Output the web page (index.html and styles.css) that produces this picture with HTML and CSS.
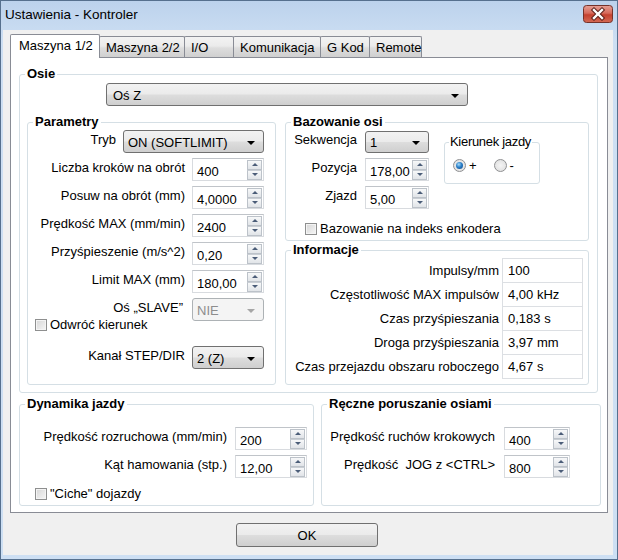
FILE: index.html
```html
<!DOCTYPE html>
<html lang="pl">
<head>
<meta charset="utf-8">
<title>Ustawienia - Kontroler</title>
<link rel="stylesheet" href="styles.css">
</head>
<body>
<div class="window">
  <div class="titlebar">
    <span class="title">Ustawienia - Kontroler</span>
    <span class="close">
      <svg width="30" height="18" viewBox="0 0 30 18">
        <defs>
          <linearGradient id="cg" x1="0" y1="0" x2="0" y2="1">
            <stop offset="0" stop-color="#e6a196"/>
            <stop offset="0.45" stop-color="#d66a5b"/>
            <stop offset="0.55" stop-color="#c4412f"/>
            <stop offset="1" stop-color="#d46a55"/>
          </linearGradient>
        </defs>
        <rect x="0.5" y="0.5" width="29" height="17" rx="3" fill="url(#cg)" stroke="#74322a"/>
        <path d="M11 5 L19 13 M19 5 L11 13" stroke="#5a1f18" stroke-width="4.4" stroke-linecap="square"/>
        <path d="M11 5 L19 13 M19 5 L11 13" stroke="#ffffff" stroke-width="2.4" stroke-linecap="square"/>
      </svg>
    </span>
  </div>
  <div class="client">
    <div class="tabs">
      <div class="tab active w1">Maszyna 1/2</div>
      <div class="tab w2">Maszyna 2/2</div>
      <div class="tab w3">I/O</div>
      <div class="tab w4">Komunikacja</div>
      <div class="tab w5">G Kod</div>
      <div class="tab w6">Remote</div>
    </div>
    <div class="page">
      <fieldset class="grp osie">
        <legend>Osie</legend>
        <div class="combo axis"><span>Oś Z</span><i class="caret"></i></div>
        <div class="osie-cols">
          <fieldset class="grp params">
            <legend>Parametry</legend>
            <div class="prow first"><span class="lbl">Tryb</span><div class="combo tryb"><span>ON (SOFTLIMIT)</span><i class="caret"></i></div></div>
            <div class="prow"><span class="lbl">Liczba kroków na obrót</span><div class="spin w72"><span class="val">400</span><span class="arrows"><span class="up"></span><span class="dn"></span></span></div></div>
            <div class="prow"><span class="lbl">Posuw na obrót (mm)</span><div class="spin w72"><span class="val">4,0000</span><span class="arrows"><span class="up"></span><span class="dn"></span></span></div></div>
            <div class="prow"><span class="lbl">Prędkość MAX (mm/min)</span><div class="spin w72"><span class="val">2400</span><span class="arrows"><span class="up"></span><span class="dn"></span></span></div></div>
            <div class="prow"><span class="lbl">Przyśpieszenie (m/s^2)</span><div class="spin w72"><span class="val">0,20</span><span class="arrows"><span class="up"></span><span class="dn"></span></span></div></div>
            <div class="prow"><span class="lbl">Limit MAX (mm)</span><div class="spin w72"><span class="val">180,00</span><span class="arrows"><span class="up"></span><span class="dn"></span></span></div></div>
            <div class="prow"><span class="lbl slave">Oś „SLAVE”</span><div class="combo disabled w72"><span>NIE</span><i class="caret"></i></div></div>
            <div class="check odwroc"><span class="box"></span><span>Odwróć kierunek</span></div>
            <div class="prow kanal"><span class="lbl">Kanał STEP/DIR</span><div class="combo w72"><span>2 (Z)</span><i class="caret"></i></div></div>
          </fieldset>
          <div class="rcol">
            <fieldset class="grp homing">
              <legend>Bazowanie osi</legend>
              <div class="homing-top">
                <div class="hgrid">
                  <span class="lbl">Sekwencja</span><div class="combo seq"><span>1</span><i class="caret"></i></div>
                  <span class="lbl">Pozycja</span><div class="spin w64"><span class="val">178,00</span><span class="arrows"><span class="up"></span><span class="dn"></span></span></div>
                  <span class="lbl">Zjazd</span><div class="spin w64"><span class="val">5,00</span><span class="arrows"><span class="up"></span><span class="dn"></span></span></div>
                </div>
                <fieldset class="grp dir">
                  <legend>Kierunek jazdy</legend>
                  <div class="radios">
                    <span class="radio-item"><span class="radio on"></span><span>+</span></span>
                    <span class="radio-item"><span class="radio"></span><span>-</span></span>
                  </div>
                </fieldset>
              </div>
              <div class="check enc"><span class="box"></span><span>Bazowanie na indeks enkodera</span></div>
            </fieldset>
            <fieldset class="grp info">
              <legend>Informacje</legend>
              <div class="irow"><span>Impulsy/mm</span><span class="ival">100</span></div>
              <div class="irow"><span>Częstotliwość MAX impulsów</span><span class="ival">4,00 kHz</span></div>
              <div class="irow"><span>Czas przyśpieszania</span><span class="ival">0,183 s</span></div>
              <div class="irow"><span>Droga przyśpieszania</span><span class="ival">3,97 mm</span></div>
              <div class="irow"><span>Czas przejazdu obszaru roboczego</span><span class="ival">4,67 s</span></div>
            </fieldset>
          </div>
        </div>
      </fieldset>
      <div class="bottom-groups">
        <fieldset class="grp dyn">
          <legend>Dynamika jazdy</legend>
          <div class="drow first"><span class="lbl">Prędkość rozruchowa (mm/min)</span><div class="spin w72"><span class="val">200</span><span class="arrows"><span class="up"></span><span class="dn"></span></span></div></div>
          <div class="drow"><span class="lbl">Kąt hamowania (stp.)</span><div class="spin w72"><span class="val">12,00</span><span class="arrows"><span class="up"></span><span class="dn"></span></span></div></div>
          <div class="check ciche"><span class="box"></span><span>"Ciche" dojazdy</span></div>
        </fieldset>
        <fieldset class="grp jog">
          <legend>Ręczne poruszanie osiami</legend>
          <div class="jrow first"><span class="lbl">Prędkość ruchów krokowych</span><div class="spin w66"><span class="val">400</span><span class="arrows"><span class="up"></span><span class="dn"></span></span></div></div>
          <div class="jrow"><span class="lbl">Prędkość&nbsp; JOG z &lt;CTRL&gt;</span><div class="spin w66"><span class="val">800</span><span class="arrows"><span class="up"></span><span class="dn"></span></span></div></div>
        </fieldset>
      </div>
    </div>
    <div class="buttons"><div class="btn">OK</div></div>
  </div>
</div>
</body>
</html>
```

FILE: styles.css
```css
* { box-sizing: border-box; }
html, body { margin: 0; padding: 0; }
body {
  width: 618px;
  height: 560px;
  overflow: hidden;
  font-family: "Liberation Sans", Arial, sans-serif;
  font-size: 13px;
  color: #000;
  background: #cbdcf1;
}

.window {
  width: 618px;
  height: 560px;
  display: flex;
  flex-direction: column;
  border: 1px solid #56708e;
  padding: 0 4px 4px 2px;
  background: linear-gradient(#bcd2ec, #cddff3 40px, #cddff3);
}

/* title bar */
.titlebar {
  height: 29px;
  display: flex;
  justify-content: space-between;
  align-items: flex-start;
}
.title {
  padding: 6px 0 0 2px;
  font-size: 13.5px;
  line-height: 16px;
}
.close {
  margin-top: 4px;
  width: 30px;
  height: 18px;
  display: block;
}
.close svg { display: block; }

/* client */
.client {
  flex: 1;
  background: #f0f0f0;
  padding: 4px 5px 0 7px;
  display: flex;
  flex-direction: column;
}

.tabs {
  height: 23px;
  display: flex;
  align-items: flex-end;
  position: relative;
  z-index: 2;
}
.tab {
  height: 21px;
  margin-left: -1px;
  padding-left: 6px;
  display: flex;
  align-items: center;
  border: 1px solid #898c95;
  border-bottom: none;
  border-radius: 2px 2px 0 0;
  background: linear-gradient(#f3f3f3 0%, #ebebeb 45%, #dddddd 55%, #d0d0d0 100%);
  white-space: nowrap;
}
.tab.active {
  height: 24px;
  margin-left: 0;
  margin-bottom: -1px;
  padding-left: 8px;
  padding-bottom: 2px;
  background: #ffffff;
  position: relative;
  z-index: 3;
}
.w1 { width: 90px; }
.w2 { width: 86px; margin-left: -1px; }
.w3 { width: 50px; }
.w4 { width: 88px; }
.w5 { width: 50px; }
.w6 { width: 53px; }

.page {
  width: 598px;
  height: 456px;
  border: 1px solid #898c95;
  background: #ffffff;
  padding: 8px 0 0 8px;
}

/* group boxes */
.grp {
  margin: 0;
  padding: 0;
  min-width: 0;
  border: 1px solid #d5dfe5;
  border-radius: 3px;
}
.grp > legend {
  margin-left: 5px;
  padding: 0 2px;
  line-height: 16px;
  font-weight: bold;
  white-space: nowrap;
}
.osie { width: 579px; height: 327px; }
.osie-cols {
  display: flex;
  margin: 8px 0 0 7px;
}
.params { width: 249px; height: 271px; margin-right: 9px; }
.rcol { width: 304px; display: flex; flex-direction: column; }
.homing { height: 127px; }
.info { height: 143px; margin-top: 1px; }

.bottom-groups {
  display: flex;
  margin-top: 3px;
}
.dyn { width: 295px; height: 110px; margin-right: 7px; }
.jog { width: 280px; height: 110px; }

/* combo boxes */
.combo {
  height: 23px;
  display: flex;
  align-items: center;
  justify-content: space-between;
  border: 1px solid #707070;
  border-radius: 3px;
  background: linear-gradient(#f2f2f2 0%, #ebebeb 48%, #dddddd 52%, #cfcfcf 100%);
  padding: 1px 8px 0 4px;
  white-space: nowrap;
}
.combo .caret {
  width: 0;
  height: 0;
  border-left: 4px solid transparent;
  border-right: 4px solid transparent;
  border-top: 4px solid #000;
  margin-top: 1px;
}
.combo.axis { width: 362px; margin: 1px 0 0 86px; padding-left: 6px; }
.combo.tryb { width: 141px; }
.combo.seq { width: 64px; height: 22px; }
.combo.w72 { width: 72px; }
.combo.disabled {
  border-color: #adb2b5;
  background: #f4f4f4;
  color: #8d8d8d;
}
.combo.disabled .caret { border-top-color: #a6a6a6; }

/* spin boxes */
.spin {
  height: 23px;
  display: flex;
  align-items: center;
  border: 1px solid #d8dbdf;
  border-top-color: #c0c4c9;
  background: #fff;
  padding-right: 1px;
}
.spin.w72 { width: 72px; }
.spin.w66 { width: 66px; }
.spin.w64 { width: 64px; }
.spin .val {
  flex: 1;
  padding: 3px 0 0 4px;
  white-space: nowrap;
}
.arrows {
  width: 15px;
  display: flex;
  flex-direction: column;
}
.arrows .up, .arrows .dn {
  height: 10px;
  border: 1px solid #bcc2c9;
  background: linear-gradient(#f7f8f9, #e1e4e8);
  display: flex;
  align-items: center;
  justify-content: center;
}
.arrows .dn { border-top-color: #c9ced4; }
.arrows .up::after {
  content: "";
  border-left: 3px solid transparent;
  border-right: 3px solid transparent;
  border-bottom: 3px solid #4b5d78;
}
.arrows .dn::after {
  content: "";
  border-left: 3px solid transparent;
  border-right: 3px solid transparent;
  border-top: 3px solid #4b5d78;
}

/* parameter rows */
.lbl { padding-bottom: 5px; white-space: nowrap; }
.prow {
  display: flex;
  justify-content: flex-end;
  align-items: center;
  gap: 7px;
  padding-right: 11px;
  height: 23px;
  margin-top: 5px;
}
.prow.first { margin-top: 0; }
.prow .slave { margin-right: 2px; }
.prow.kanal { margin-top: 14px; }

.check {
  display: flex;
  align-items: center;
  gap: 3px;
  height: 15px;
  white-space: nowrap;
}
.check .box {
  width: 12px;
  height: 12px;
  border: 1px solid #8e8f8f;
  background: linear-gradient(135deg, #d6d6d6, #f6f6f6);
  box-shadow: inset 0 0 0 1px #f4f4f4;
}
.check.odwroc { margin-top: -4px; padding-left: 7px; }
.check.enc { margin-top: 12px; padding-left: 19px; }
.check.ciche { margin-top: 8px; padding-left: 15px; }

/* homing */
.homing-top {
  display: flex;
  margin-top: 1px;
}
.hgrid {
  display: grid;
  grid-template-columns: 70px 64px;
  column-gap: 8px;
  row-gap: 5px;
  align-items: center;
  margin-left: 1px;
}
.hgrid .lbl { text-align: right; }
.dir {
  width: 96px;
  height: 50px;
  margin: 3px 0 0 15px;
}
.grp.dir > legend {
  font-weight: normal;
  margin-left: 4px;
  padding: 0 1px;
  letter-spacing: -0.3px;
}
.radios {
  display: flex;
  gap: 17px;
  margin: 9px 0 0 8px;
}
.radio-item {
  display: flex;
  align-items: center;
  gap: 3px;
  height: 13px;
}
.radio {
  width: 13px;
  height: 13px;
  border-radius: 50%;
  border: 1px solid #8f9092;
  background: radial-gradient(circle at 50% 50%, #f4f4f4 0%, #dcdcdc 100%);
  display: flex;
  align-items: center;
  justify-content: center;
}
.radio.on::after {
  content: "";
  width: 7px;
  height: 7px;
  border-radius: 50%;
  background: radial-gradient(circle at 40% 35%, #a6dcfa 0%, #2b7fc8 45%, #0d4384 100%);
}

/* info */
.irow {
  display: flex;
  justify-content: flex-end;
  align-items: center;
  gap: 3px;
  padding-right: 5px;
  margin-top: -1px;
  white-space: nowrap;
}
.irow:first-of-type { margin-top: 0; }
.ival {
  width: 81px;
  height: 25px;
  border: 1px solid #dcdfe3;
  padding: 3px 0 0 5px;
  line-height: 17px;
}

/* dynamics */
.drow, .jrow {
  display: flex;
  justify-content: flex-end;
  align-items: center;
  height: 23px;
  margin-top: 5px;
}
.drow { gap: 8px; padding-right: 6px; }
.jrow { gap: 9px; padding-right: 30px; }
.drow.first, .jrow.first { margin-top: 15px; }

/* buttons */
.buttons {
  display: flex;
  justify-content: center;
  padding-right: 4px;
  margin-top: 10px;
}
.btn {
  width: 142px;
  height: 24px;
  border: 1px solid #707070;
  border-radius: 3px;
  background: linear-gradient(#f2f2f2 0%, #ebebeb 48%, #dddddd 52%, #cfcfcf 100%);
  display: flex;
  align-items: center;
  justify-content: center;
}
```
